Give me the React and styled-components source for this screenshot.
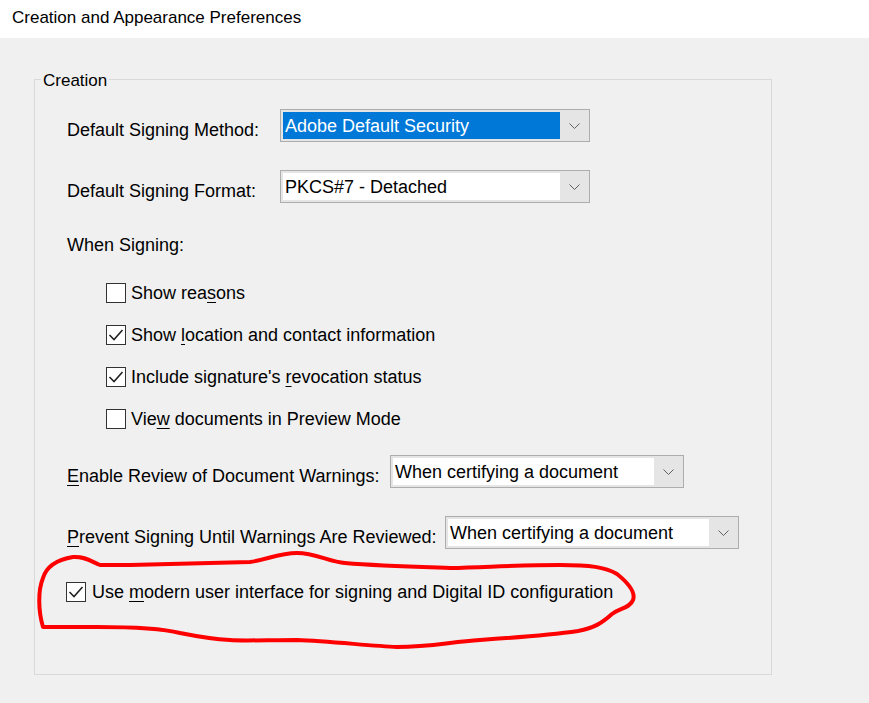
import React from "react";
import styled, { createGlobalStyle } from "styled-components";

const GlobalStyle = createGlobalStyle`
  html, body {
    margin: 0;
    padding: 0;
    background: #f0f0f0;
  }
  body {
    font-family: "Liberation Sans", Arial, sans-serif;
    color: #000;
  }
`;

const Page = styled.div`
  position: relative;
  width: 869px;
  height: 703px;
  overflow: hidden;
  background: #f0f0f0;
`;

const TitleBar = styled.header`
  height: 38px;
  background: #fff;
  padding-left: 12px;
  display: flex;
  align-items: center;
  font-size: 17px;
  padding-bottom: 3px;
  box-sizing: border-box;
`;

const GroupBox = styled.section`
  position: relative;
  box-sizing: border-box;
  width: 738px;
  height: 596px;
  margin: 41px 0 0 34px;
  border: 1px solid #d9d9d9;
  padding: 29px 0 0 32px;
  display: flex;
  flex-direction: column;
  font-size: 18px;
`;

const Legend = styled.span`
  position: absolute;
  top: -10px;
  left: 6px;
  padding: 0 2px;
  background: #f0f0f0;
  font-size: 17px;
  line-height: 22px;
`;

const FieldRow = styled.div`
  display: flex;
  align-items: center;
  height: 33px;
  margin-top: ${(p) => p.$mt || 0}px;
`;

const Label = styled.span`
  width: ${(p) => (p.$width ? `${p.$width}px` : "auto")};
  flex-shrink: 0;
  line-height: 24px;
  padding-top: ${(p) => (p.$shift ? 8 : 0)}px;
  white-space: nowrap;
`;

const TextRow = styled.div`
  height: 24px;
  line-height: 24px;
  margin-top: ${(p) => p.$mt || 0}px;
`;

const Select = styled.div`
  box-sizing: border-box;
  width: ${(p) => p.$width}px;
  height: 33px;
  border: 1px solid #adadad;
  background: #e5e5e5;
  padding: 2px 0 2px 2px;
  display: flex;
`;

const SelectField = styled.div`
  flex: 1;
  background: ${(p) => (p.$selected ? "#0078d7" : "#fff")};
  color: ${(p) => (p.$selected ? "#fff" : "#000")};
  padding: 1px 0 0 2px;
  display: flex;
  align-items: center;
  white-space: nowrap;
  overflow: hidden;
`;

const ArrowBox = styled.div`
  width: 29px;
  display: flex;
  align-items: center;
  justify-content: center;
`;

const CheckRow = styled.label`
  display: flex;
  align-items: center;
  gap: ${(p) => p.$gap || 5}px;
  height: 24px;
  margin-top: ${(p) => p.$mt || 0}px;
  margin-left: ${(p) => p.$indent || 0}px;
  white-space: nowrap;
`;

const Box = styled.span`
  box-sizing: border-box;
  width: 20px;
  height: 20px;
  border: 1px solid #333;
  background: #fff;
  display: flex;
  align-items: center;
  justify-content: center;
  flex-shrink: 0;
`;

const Mn = styled.span`
  text-decoration: underline;
  text-decoration-thickness: 1px;
  text-underline-offset: 3px;
`;

const Annotation = styled.svg`
  position: absolute;
  left: 0;
  top: 0;
  pointer-events: none;
`;

const Chevron = () => (
  <svg width="11" height="6" viewBox="0 0 11 6">
    <polyline points="0.5,0.5 5.5,5.5 10.5,0.5" fill="none" stroke="#606060" strokeWidth="1" />
  </svg>
);

const Dropdown = ({ width, value, selected }) => (
  <Select $width={width}>
    <SelectField $selected={selected}>{value}</SelectField>
    <ArrowBox>
      <Chevron />
    </ArrowBox>
  </Select>
);

const Checkbox = ({ checked, children, ...rest }) => (
  <CheckRow {...rest}>
    <Box>
      {checked && (
        <svg width="18" height="18" viewBox="0 0 18 18">
          <polyline points="2.5,9 7,13.5 15.5,4" fill="none" stroke="#222" strokeWidth="1.6" />
        </svg>
      )}
    </Box>
    <span>{children}</span>
  </CheckRow>
);

const loopPath =
  "M 73 557 C 85 556, 92 562, 100 565 L 130 565 C 180 564, 220 563, 250 562 " +
  "C 265 560, 280 553, 297 553 C 315 553, 330 562, 345 563 C 380 566, 420 567, 450 568 " +
  "C 490 567, 520 565, 560 565 C 590 565, 605 567, 617 574 C 627 582, 636 592, 633 600 " +
  "C 630 608, 620 608, 612 614 C 603 622, 595 628, 578 631 C 550 635, 510 638, 480 640 " +
  "C 450 642, 430 647, 397 647 C 370 646, 330 641, 297 640 C 270 640, 240 641, 230 640 " +
  "C 210 639, 195 636, 180 633 C 160 628, 130 627, 97 627 L 43 627 " +
  "C 38 610, 38 590, 43 578 C 46 568, 55 560, 73 557 Z";

export default function App() {
  return (
    <Page>
      <GlobalStyle />
      <TitleBar>Creation and Appearance Preferences</TitleBar>
      <GroupBox>
        <Legend>Creation</Legend>
        <FieldRow>
          <Label $width={213} $shift>Default Signing Method:</Label>
          <Dropdown width={310} value="Adobe Default Security" selected />
        </FieldRow>
        <FieldRow $mt={28}>
          <Label $width={213} $shift>Default Signing Format:</Label>
          <Dropdown width={310} value="PKCS#7 - Detached" />
        </FieldRow>
        <TextRow $mt={30}>When Signing:</TextRow>
        <Checkbox $mt={24} $indent={39}>
          Show rea<Mn>s</Mn>ons
        </Checkbox>
        <Checkbox $mt={18} $indent={39} checked>
          Show <Mn>l</Mn>ocation and contact information
        </Checkbox>
        <Checkbox $mt={18} $indent={39} checked>
          Include signature's <Mn>r</Mn>evocation status
        </Checkbox>
        <Checkbox $mt={18} $indent={39}>
          Vie<Mn>w</Mn> documents in Preview Mode
        </Checkbox>
        <FieldRow $mt={24}>
          <Label $width={323} $shift>
            <Mn>E</Mn>nable Review of Document Warnings:
          </Label>
          <Dropdown width={294} value="When certifying a document" />
        </FieldRow>
        <FieldRow $mt={28}>
          <Label $width={378} $shift>
            <Mn>P</Mn>revent Signing Until Warnings Are Reviewed:
          </Label>
          <Dropdown width={294} value="When certifying a document" />
        </FieldRow>
        <Checkbox $mt={31} $indent={-1} $gap={6} checked>
          Use <Mn>m</Mn>odern user interface for signing and Digital ID configuration
        </Checkbox>
      </GroupBox>
      <Annotation width="869" height="703" viewBox="0 0 869 703">
        <path d={loopPath} fill="none" stroke="#ff0000" strokeWidth="4" strokeLinejoin="round" />
      </Annotation>
    </Page>
  );
}
